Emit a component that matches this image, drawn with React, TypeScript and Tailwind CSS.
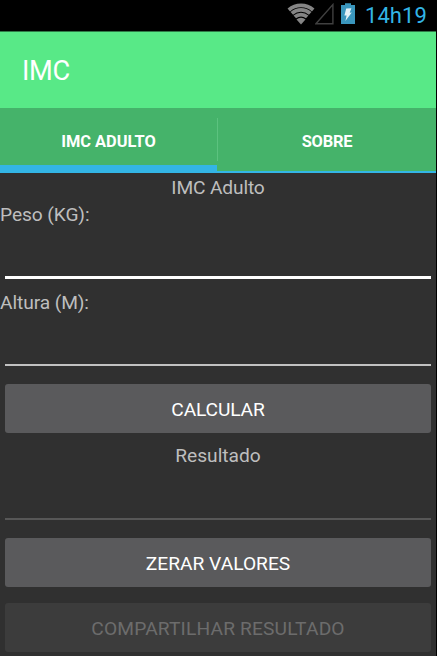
import { useState } from 'react'
import clsx from 'clsx'

const TABS = ['IMC ADULTO', 'SOBRE']

function WifiIcon() {
  return (
    <svg className="w-[28px] h-[22px]" viewBox="0 0 28 22" fill="none" stroke="#858585" strokeWidth="3.8">
      <path d="M1.8 7A18.6 18.6 0 0 1 26.2 7" />
      <path d="M4.8 10.4A14 14 0 0 1 23.2 10.4" />
      <path d="M7.8 13.9A9.4 9.4 0 0 1 20.2 13.9" />
      <path d="M14 21.6L9.5 16.5A6.6 6.6 0 0 1 18.5 16.5Z" fill="#858585" stroke="none" />
    </svg>
  )
}

function SignalIcon() {
  return (
    <svg className="w-[19px] h-[22px]" viewBox="0 0 19 22" fill="none" stroke="#404040" strokeWidth="1.4">
      <path d="M0.9 20.7L17.9 1.6V20.7Z" />
    </svg>
  )
}

function BatteryIcon() {
  return (
    <svg className="w-[14px] h-[22px]" viewBox="0 0 14 22">
      <path d="M4 0.3H10V2H14V21H0V2H4Z" fill="#3a96bd" />
      <path d="M5.2 5.6L10.4 5.2L8.7 9.8L10.8 9.6L4.4 18L5.6 12.4L3.4 12.6Z" fill="#e4f2f8" />
    </svg>
  )
}

interface FieldProps {
  value: string
  onChange?: (value: string) => void
  label: string
  className: string
}

function Field({ value, onChange, label, className }: FieldProps) {
  return (
    <input
      aria-label={label}
      value={value}
      disabled={!onChange}
      onChange={e => onChange?.(e.target.value)}
      className={clsx('mx-[5px] block w-[426px] bg-transparent px-1 text-[22px] text-white outline-none', className)}
    />
  )
}

interface ButtonProps {
  children: string
  onClick?: () => void
  disabled?: boolean
  className: string
}

function Button({ children, onClick, disabled, className }: ButtonProps) {
  return (
    <button
      onClick={onClick}
      disabled={disabled}
      className={clsx(
        'mx-[5px] block h-[49px] w-[426px] rounded-[3px] pt-0.5 text-center text-[19.2px]',
        disabled ? 'bg-[#3c3c3c] text-[#6c6c6c]' : 'bg-[#5a5a5c] text-white',
        className,
      )}
    >
      {children}
    </button>
  )
}

export default function App() {
  const [tab, setTab] = useState(0)
  const [peso, setPeso] = useState('')
  const [altura, setAltura] = useState('')
  const [resultado, setResultado] = useState('')

  const calcular = () => {
    const imc = Number(peso) / Number(altura) ** 2
    if (Number.isFinite(imc)) setResultado(imc.toFixed(2))
  }

  const zerar = () => {
    setPeso('')
    setAltura('')
    setResultado('')
  }

  return (
    <div className="h-[656px] w-[437px] overflow-hidden bg-black pr-px font-[Roboto,sans-serif]">
      <div className="h-full bg-[#303030]">
        {/* Status bar */}
        <div className="flex h-[31px] items-start justify-end bg-black pt-[3px] pr-[9px]">
          <WifiIcon />
          <SignalIcon />
          <span className="w-[7px]" />
          <BatteryIcon />
          <span className="ml-[10px] text-[22px] leading-[25px] tracking-[0.1px] text-[#33b5e5]">14h19</span>
        </div>

        {/* Title */}
        <header className="flex h-[77px] items-center border-t border-[#2f7a47] bg-[#58e987] pt-0.5 pl-[22px]">
          <h1 className="text-[27.2px] leading-8 tracking-[-0.3px] text-white">IMC</h1>
        </header>

        {/* Tabs */}
        <nav className="flex h-[65px] bg-[#45b36a]">
          {TABS.map((name, i) => (
            <button
              key={name}
              onClick={() => setTab(i)}
              className={clsx(
                'flex items-center justify-center border-[#33b5e5] text-[16.4px] font-bold text-white',
                i === 0 ? 'w-[217px]' : 'w-[219px] tracking-[-0.2px]',
                tab === i ? 'border-b-8 pt-3' : 'border-b-2 pt-1.5',
              )}
            >
              {i > 0 && <span className="-mt-1.5 mr-auto h-[43px] w-px self-center bg-[#5cc27f]" />}
              <span className={clsx(i > 0 && 'mr-auto')}>{name}</span>
            </button>
          ))}
        </nav>

        {/* Form */}
        <main className="text-[19.2px] leading-[26px] text-[#bebebe]">
          <p className="pt-[2px] text-center tracking-[-0.15px]">IMC Adulto</p>
          <p className="pt-px tracking-[-0.1px]">Peso (KG):</p>
          <Field label="Peso" value={peso} onChange={setPeso} className="h-[51px] border-b-3 border-white" />
          <p className="pt-[11px] tracking-[-0.1px]">Altura (M):</p>
          <Field label="Altura" value={altura} onChange={setAltura} className="h-[50px] border-b-2 border-[#c1c1c1]" />
          <Button onClick={calcular} className="mt-[18px] tracking-[-0.15px]">CALCULAR</Button>
          <p className="pt-[10px] text-center">Resultado</p>
          <Field label="Resultado" value={resultado} className="h-[51px] border-b-2 border-[#575757]" />
          <Button onClick={zerar} className="mt-[18px]">ZERAR VALORES</Button>
          <Button disabled={!resultado} className="mt-4 tracking-[0.15px]">COMPARTILHAR RESULTADO</Button>
        </main>
      </div>
    </div>
  )
}
